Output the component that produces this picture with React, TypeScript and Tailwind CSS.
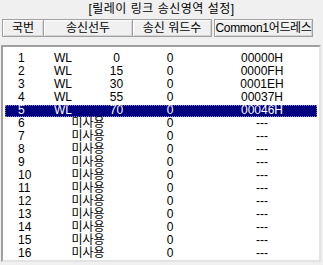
import React from 'react';

type Row = {
  no: number;
  dev?: string;
  start?: number;
  words: number;
  addr: string;
};

const rows: Row[] = [
  { no: 1, dev: 'WL', start: 0, words: 0, addr: '00000H' },
  { no: 2, dev: 'WL', start: 15, words: 0, addr: '0000FH' },
  { no: 3, dev: 'WL', start: 30, words: 0, addr: '0001EH' },
  { no: 4, dev: 'WL', start: 55, words: 0, addr: '00037H' },
  { no: 5, dev: 'WL', start: 70, words: 0, addr: '00046H' },
  ...Array.from({ length: 11 }, (_, i) => ({ no: i + 6, words: 0, addr: '---' })),
];

const SELECTED = 5;

function HeaderCell({ label, className }: { label: string; className: string }) {
  return (
    <div
      className={
        'flex h-full items-center justify-center border border-[#a0a0a0] bg-[#f0f0f0] shadow-[inset_1px_1px_0_#ffffff,inset_-1px_-1px_0_#d4d4d4] whitespace-nowrap overflow-hidden ' +
        className
      }
    >
      {label}
    </div>
  );
}

export default function App() {
  return (
    <div
      className="w-[323px] h-[265px] bg-[#f0f0f0] text-black text-[12px] leading-[13px] overflow-hidden"
      style={{ fontFamily: '"Liberation Sans", "Noto Sans CJK KR", sans-serif' }}
    >
      {/* Title */}
      <div className="flex h-[19px] items-center justify-center tracking-[0.5px]">[릴레이 링크 송신영역 설정]</div>

      {/* Column headers */}
      <div className="flex h-[18px] pl-[2px]">
        <HeaderCell label="국번" className="w-[42px]" />
        <HeaderCell label="송신선두" className="w-[89px] border-l-0" />
        <HeaderCell label="송신 워드수" className="w-[79px] border-l-0" />
        <HeaderCell label="Common1어드레스" className="ml-[2px] w-[99px] border-[#808080] tracking-[-0.3px]" />
      </div>

      {/* List box */}
      <div className="mt-[8px] ml-[1px] h-[217px] w-[320px] border-2 border-t-[#a0a0a0] border-l-[#a0a0a0] border-r-[#e3e3e3] border-b-[#e3e3e3] bg-white pt-[5px]">
        {rows.map((r) => {
          const sel = r.no === SELECTED;
          return (
            <div key={r.no} className="flex h-[13px] mx-[2px] items-center">
              <div
                className={
                  'flex h-[12px] w-[312px] items-center ' +
                  (sel ? 'bg-[#000080] text-white outline outline-1 outline-dotted outline-[#8080c0] -outline-offset-1' : '')
                }
              >
                <div className="w-[38px] pl-[13px]">{r.no}</div>
                {r.dev ? (
                  <>
                    <div className="w-[40px] text-center">{r.dev}</div>
                    <div className="w-[17px]" />
                    <div className="w-[33px] text-center">{r.start}</div>
                  </>
                ) : (
                  <div className="w-[90px] text-center">미사용</div>
                )}
                <div className="w-[74px] text-center">{r.words}</div>
                <div className="w-[110px] text-center">{r.addr}</div>
              </div>
            </div>
          );
        })}
      </div>
    </div>
  );
}
